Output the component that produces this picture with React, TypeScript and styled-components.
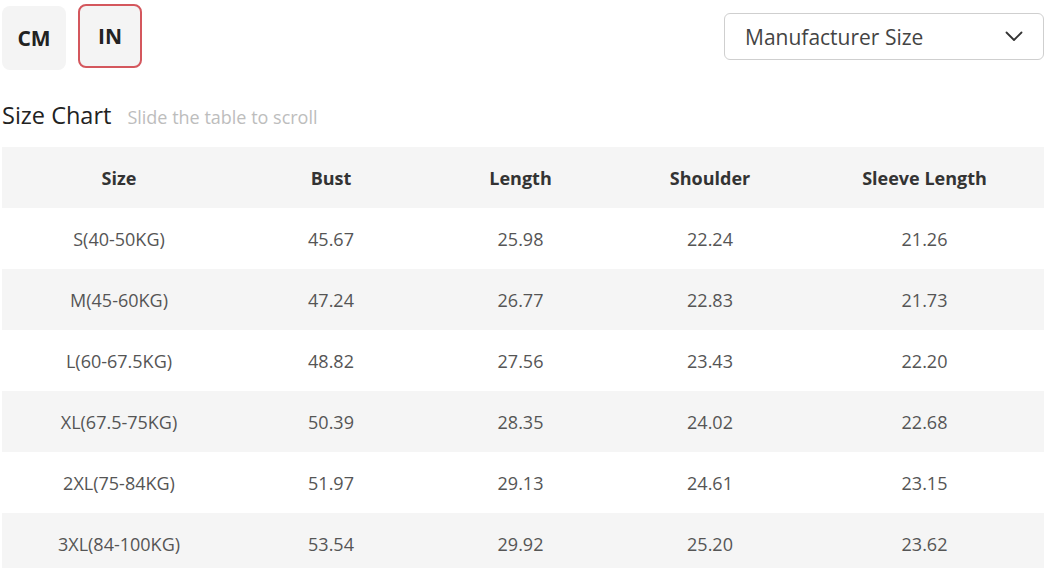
import React from "react";
import styled, { createGlobalStyle } from "styled-components";

const Global = createGlobalStyle`
  html, body { margin: 0; padding: 0; background: #fff; }
  body { font-family: "Open Sans", "Noto Sans", sans-serif; color: #333; }
`;

const Page = styled.div`
  width: 1048px;
  height: 568px;
  overflow: hidden;
  padding: 0 4px 0 2px;
  box-sizing: border-box;
`;

const TopBar = styled.div`
  display: flex;
  align-items: flex-start;
  justify-content: space-between;
  height: 92px;
`;

const UnitGroup = styled.div`
  display: flex;
  gap: 12px;
  padding-top: 5px;
`;

const UnitButton = styled.button<{ $active?: boolean }>`
  width: 64px;
  height: 64px;
  margin-top: ${(p) => (p.$active ? "-1px" : "1px")};
  border-radius: 8px;
  background: #f4f4f4;
  border: 2px solid ${(p) => (p.$active ? "#d4575d" : "transparent")};
  font-family: "Open Sans", sans-serif;
  font-weight: 700;
  font-size: 21px;
  color: #222;
  display: flex;
  align-items: center;
  justify-content: center;
  padding: 0;
  box-sizing: border-box;
`;

const Select = styled.div`
  margin-top: 13px;
  width: 320px;
  height: 47px;
  border: 1px solid #cfcfcf;
  border-radius: 6px;
  box-sizing: border-box;
  display: flex;
  align-items: center;
  justify-content: space-between;
  padding: 0 20px 0 20px;
  font-size: 21px;
  color: #444;
`;

const TitleRow = styled.div`
  display: flex;
  align-items: baseline;
  gap: 16px;
  height: 55px;
`;

const Title = styled.div`
  font-size: 23.5px;
  color: #222;
  line-height: 46px;
`;

const Hint = styled.div`
  font-size: 18px;
  color: #bdbdbd;
`;

const Table = styled.table`
  border-collapse: collapse;
  table-layout: fixed;
  width: 1042px;
`;

const Row = styled.tr<{ $shade?: boolean }>`
  height: 61px;
  background: ${(p) => (p.$shade ? "#f5f5f5" : "#fff")};
`;

const HeadCell = styled.th`
  font-weight: 700;
  font-size: 18px;
  color: #333;
  text-align: center;
  padding: 0;
`;

const Cell = styled.td`
  font-size: 18px;
  color: #555;
  text-align: center;
  padding: 0;
`;

const widths = [234, 190, 189, 190, 239];
const headers = ["Size", "Bust", "Length", "Shoulder", "Sleeve Length"];
const rows = [
  ["S(40-50KG)", "45.67", "25.98", "22.24", "21.26"],
  ["M(45-60KG)", "47.24", "26.77", "22.83", "21.73"],
  ["L(60-67.5KG)", "48.82", "27.56", "23.43", "22.20"],
  ["XL(67.5-75KG)", "50.39", "28.35", "24.02", "22.68"],
  ["2XL(75-84KG)", "51.97", "29.13", "24.61", "23.15"],
  ["3XL(84-100KG)", "53.54", "29.92", "25.20", "23.62"],
];

export default function App() {
  return (
    <Page>
      <Global />
      <TopBar>
        <UnitGroup>
          <UnitButton>CM</UnitButton>
          <UnitButton $active>IN</UnitButton>
        </UnitGroup>
        <Select>
          <span>Manufacturer Size</span>
          <svg width="18" height="11" viewBox="0 0 18 11" fill="none">
            <path d="M1.5 1.5 L9 9 L16.5 1.5" stroke="#333" strokeWidth="1.8" strokeLinecap="round" strokeLinejoin="round" />
          </svg>
        </Select>
      </TopBar>
      <TitleRow>
        <Title>Size Chart</Title>
        <Hint>Slide the table to scroll</Hint>
      </TitleRow>
      <Table>
        <colgroup>
          {widths.map((w, i) => (
            <col key={i} style={{ width: w }} />
          ))}
        </colgroup>
        <thead>
          <Row $shade>
            {headers.map((h) => (
              <HeadCell key={h}>{h}</HeadCell>
            ))}
          </Row>
        </thead>
        <tbody>
          {rows.map((r, i) => (
            <Row key={i} $shade={i % 2 === 1}>
              {r.map((c, j) => (
                <Cell key={j}>{c}</Cell>
              ))}
            </Row>
          ))}
        </tbody>
      </Table>
    </Page>
  );
}
